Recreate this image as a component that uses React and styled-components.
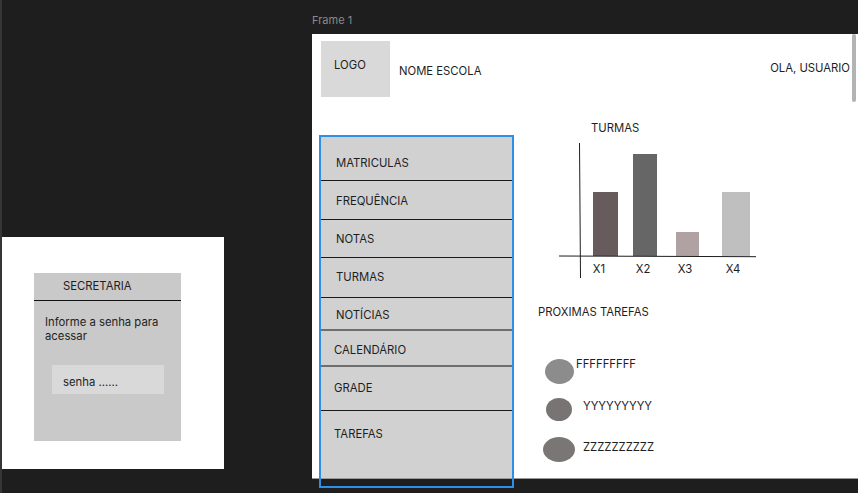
import React from "react";
import styled, { createGlobalStyle } from "styled-components";

const menuItems = [
    { label: "MATRICULAS", h: 46, pt: 20, pl: 15, line: "1px solid #1a1a1a" },
    { label: "FREQUÊNCIA", h: 39, pt: 12, pl: 15, line: "1px solid #1a1a1a" },
    { label: "NOTAS", h: 38, pt: 11, pl: 15, line: "1px solid #1a1a1a" },
    { label: "TURMAS", h: 40, pt: 11, pl: 15, line: "1px solid #1a1a1a" },
    { label: "NOTÍCIAS", h: 33, pt: 9, pl: 15, line: "2px solid #6e6e6e" },
    { label: "CALENDÁRIO", h: 36, pt: 11, pl: 13, line: "2px solid #6e6e6e" },
    { label: "GRADE", h: 44, pt: 13, pl: 13, line: "1px solid #1a1a1a" },
    { label: "TAREFAS", h: 0, pt: 15, pl: 13, line: "none" },
];

const bars = [
    { label: "X1", x: 38, y: 52, w: 25, color: "#675c5b", cx: 44 },
    { label: "X2", x: 78, y: 14, w: 24, color: "#666666", cx: 88 },
    { label: "X3", x: 121, y: 92, w: 23, color: "#b0a2a2", cx: 130 },
    { label: "X4", x: 167, y: 52, w: 28, color: "#bfbfbf", cx: 178 },
];

const tasks = [
    { text: "FFFFFFFFF", mt: 0, dot: { ml: 7, w: 29, h: 25, bg: "#8c8c8c" }, lml: 2, lmt: -2 },
    { text: "YYYYYYYYY", mt: 14, dot: { ml: 8, w: 26, h: 23, bg: "#787474" }, lml: 11, lmt: 1 },
    { text: "ZZZZZZZZZZ", mt: 16, dot: { ml: 5, w: 32, h: 25, bg: "#7a7676" }, lml: 8, lmt: 3 },
];

const App = () => {
    return (
        <React.Fragment>
            <GlobalStyle />
            <Canvas>
                <FrameLabel>Frame 1</FrameLabel>
                <MainFrame>
                    <Header>
                        <Logo>LOGO</Logo>
                        <SchoolName>NOME ESCOLA</SchoolName>
                        <Greeting>OLA, USUARIO</Greeting>
                    </Header>
                    <Body>
                        <Sidebar>
                            {menuItems.map((item) => (
                                <MenuItem key={item.label} $h={item.h} $pt={item.pt} $pl={item.pl} $line={item.line}>
                                    {item.label}
                                </MenuItem>
                            ))}
                        </Sidebar>
                        <Content>
                            <ChartTitle>TURMAS</ChartTitle>
                            <Chart width="205" height="140" viewBox="0 0 205 140">
                                {bars.map((b) => (
                                    <rect key={b.label} x={b.x} y={b.y} width={b.w} height={116 - b.y} fill={b.color} />
                                ))}
                                <line x1="4" y1="116" x2="201" y2="116.7" stroke="#1e1e1e" strokeWidth="1" />
                                <line x1="24.5" y1="3" x2="25.5" y2="138" stroke="#1e1e1e" strokeWidth="1" />
                                {bars.map((b) => (
                                    <text key={b.label} x={b.cx} y="133" textAnchor="middle">{b.label}</text>
                                ))}
                            </Chart>
                            <TasksTitle>PROXIMAS TAREFAS</TasksTitle>
                            <TaskList>
                                {tasks.map((t) => (
                                    <TaskRow key={t.text} $mt={t.mt}>
                                        <Dot $ml={t.dot.ml} $w={t.dot.w} $h={t.dot.h} $bg={t.dot.bg} />
                                        <TaskLabel $ml={t.lml} $mt={t.lmt}>{t.text}</TaskLabel>
                                    </TaskRow>
                                ))}
                            </TaskList>
                        </Content>
                    </Body>
                    <Scrollbar />
                </MainFrame>
                <Selection />
                <SecretariaFrame>
                    <Card>
                        <CardHeader>SECRETARIA</CardHeader>
                        <CardText>Informe a senha para acessar</CardText>
                        <PasswordField>senha ......</PasswordField>
                    </Card>
                </SecretariaFrame>
            </Canvas>
        </React.Fragment>
    );
};

export default App;

const GlobalStyle = createGlobalStyle`
    html, body {
        margin: 0;
        padding: 0;
        background: #1e1e1e;
    }
    body {
        font-family: Inter, "Noto Sans", sans-serif;
        font-size: 11.3px;
        line-height: 14px;
        color: #1e1e1e;
    }
`;

const Canvas = styled.div`
    position: relative;
    width: 858px;
    height: 493px;
    overflow: hidden;
    background: #1e1e1e;
    &::before {
        content: "";
        position: absolute;
        left: 0;
        top: 0;
        bottom: 0;
        width: 2px;
        background: #363636;
    }
`;

const FrameLabel = styled.div`
    position: absolute;
    left: 312px;
    top: 13px;
    font-size: 11px;
    color: #8a8a8a;
`;

const MainFrame = styled.div`
    position: absolute;
    left: 312px;
    top: 34px;
    width: 546px;
    height: 445px;
    box-sizing: border-box;
    padding: 7px 8px 0 9px;
    background: #ffffff;
    border-bottom: 1px solid #9a9a9a;
    overflow: hidden;
    display: flex;
    flex-direction: column;
`;

const Header = styled.div`
    display: flex;
    align-items: flex-start;
    height: 56px;
    flex-shrink: 0;
`;

const Logo = styled.div`
    width: 69px;
    height: 56px;
    box-sizing: border-box;
    padding: 17px 0 0 13px;
    background: #d9d9d9;
`;

const SchoolName = styled.div`
    margin: 23px 0 0 9px;
`;

const Greeting = styled.div`
    margin: 20px 0 0 auto;
`;

const Body = styled.div`
    display: flex;
    margin-top: 24px;
    flex: 1;
    min-height: 0;
`;

const Sidebar = styled.div`
    width: 191px;
    height: 353px;
    margin-top: 14px;
    flex-shrink: 0;
    background: #d1d1d1;
    display: flex;
    flex-direction: column;
`;

const MenuItem = styled.div`
    box-sizing: border-box;
    height: ${(p) => (p.$h ? `${p.$h}px` : "auto")};
    flex: ${(p) => (p.$h ? "none" : "1")};
    padding: ${(p) => p.$pt + 1}px 0 0 ${(p) => p.$pl}px;
    border-bottom: ${(p) => p.$line};
`;

const Content = styled.div`
    display: flex;
    flex-direction: column;
    margin-left: 26px;
`;

const ChartTitle = styled.div`
    margin-left: 53px;
`;

const Chart = styled.svg`
    display: block;
    margin: 5px 0 0 17px;
    & text {
        font-family: Inter, "Noto Sans", sans-serif;
        font-size: 11.3px;
        fill: #1e1e1e;
    }
`;

const TasksTitle = styled.div`
    margin-top: 25px;
`;

const TaskList = styled.div`
    display: flex;
    flex-direction: column;
    margin-top: 40px;
`;

const TaskRow = styled.div`
    display: flex;
    align-items: flex-start;
    margin-top: ${(p) => p.$mt}px;
`;

const Dot = styled.div`
    width: ${(p) => p.$w}px;
    height: ${(p) => p.$h}px;
    margin-left: ${(p) => p.$ml}px;
    border-radius: 50%;
    background: ${(p) => p.$bg};
    flex-shrink: 0;
`;

const TaskLabel = styled.div`
    margin-left: ${(p) => p.$ml}px;
    margin-top: ${(p) => p.$mt}px;
`;

const Scrollbar = styled.div`
    position: absolute;
    right: 2px;
    top: 0;
    width: 4px;
    height: 68px;
    border-radius: 2px;
    background: #b3b3b3;
`;

const Selection = styled.div`
    position: absolute;
    left: 319px;
    top: 135px;
    width: 195px;
    height: 353px;
    box-sizing: border-box;
    border: 2px solid #2f8fe4;
    pointer-events: none;
`;

const SecretariaFrame = styled.div`
    position: absolute;
    left: 2px;
    top: 237px;
    width: 222px;
    height: 232px;
    box-sizing: border-box;
    padding: 36px 0 0 32px;
    background: #ffffff;
`;

const Card = styled.div`
    width: 147px;
    height: 168px;
    background: #c9c9c9;
    display: flex;
    flex-direction: column;
`;

const CardHeader = styled.div`
    height: 28px;
    box-sizing: border-box;
    padding: 6px 0 0 29px;
    border-bottom: 1px solid #111111;
`;

const CardText = styled.div`
    width: 125px;
    margin: 14px 0 0 11px;
    line-height: 14.3px;
`;

const PasswordField = styled.div`
    width: 112px;
    height: 29px;
    box-sizing: border-box;
    margin: 21px 0 0 18px;
    padding: 10px 0 0 11px;
    background: #d9d9d9;
`;
